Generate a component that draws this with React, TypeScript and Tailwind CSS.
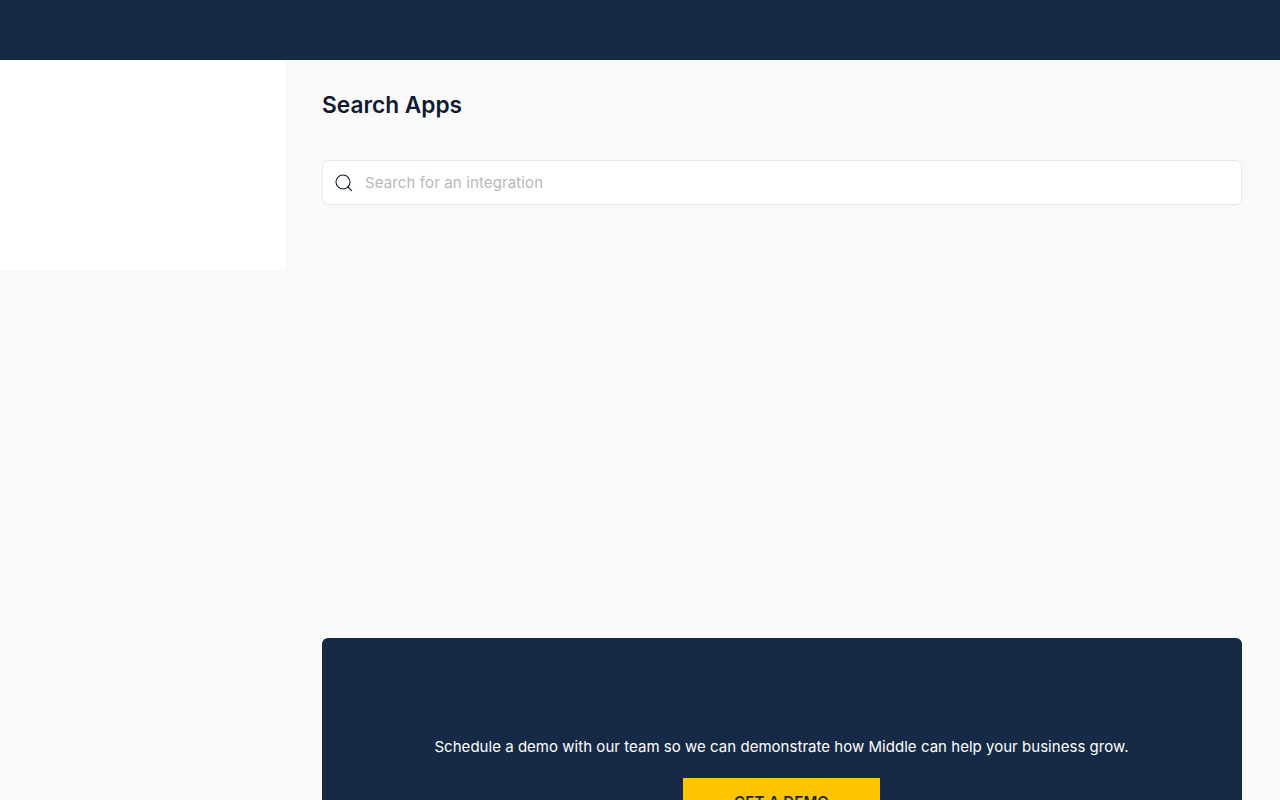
const SearchIcon = () => (
  <svg width="18" height="18" viewBox="0 0 18 18" fill="none" stroke="#111b2e" strokeWidth="1.1">
    <circle cx="8" cy="8" r="7" />
    <path d="M13 13l3.6 3.6" strokeLinecap="round" />
  </svg>
);

const App = () => {
  return (
    <div className="h-screen overflow-hidden bg-[#f9f9f9] font-['Inter',sans-serif]">
      <header className="h-[60px] bg-[#172a45]" />
      <div className="flex">
        <aside className="h-[210px] w-[285px] shrink-0 bg-white" />
        <main className="flex-1 pl-[37px] pr-[38px]">
          <h1 className="mt-[27px] text-[22.7px] leading-9 font-semibold text-[#111b2e]">Search Apps</h1>
          <div className="mt-[37px] flex h-[45px] items-center rounded-md border border-[#e8e8e8] bg-white pl-3">
            <SearchIcon />
            <input
              className="ml-3 flex-1 bg-transparent pt-[2px] text-[15px] tracking-[0.12px] text-[#111827] outline-none placeholder:text-[#b8b8b8]"
              placeholder="Search for an integration"
            />
          </div>
          <section className="mt-[433px] flex h-[200px] flex-col items-center rounded-md bg-[#172a45] pt-[97px]">
            <p className="mr-px text-[15px] leading-6 tracking-[0.03px] text-white">
              Schedule a demo with our team so we can demonstrate how Middle can help your business grow.
            </p>
            <button className="mt-[19px] mr-px h-[48px] w-[197px] bg-[#ffc400] text-[15px] font-semibold tracking-[0.1px] text-[#172a45]">
              GET A DEMO
            </button>
          </section>
        </main>
      </div>
    </div>
  );
};

export default App;
